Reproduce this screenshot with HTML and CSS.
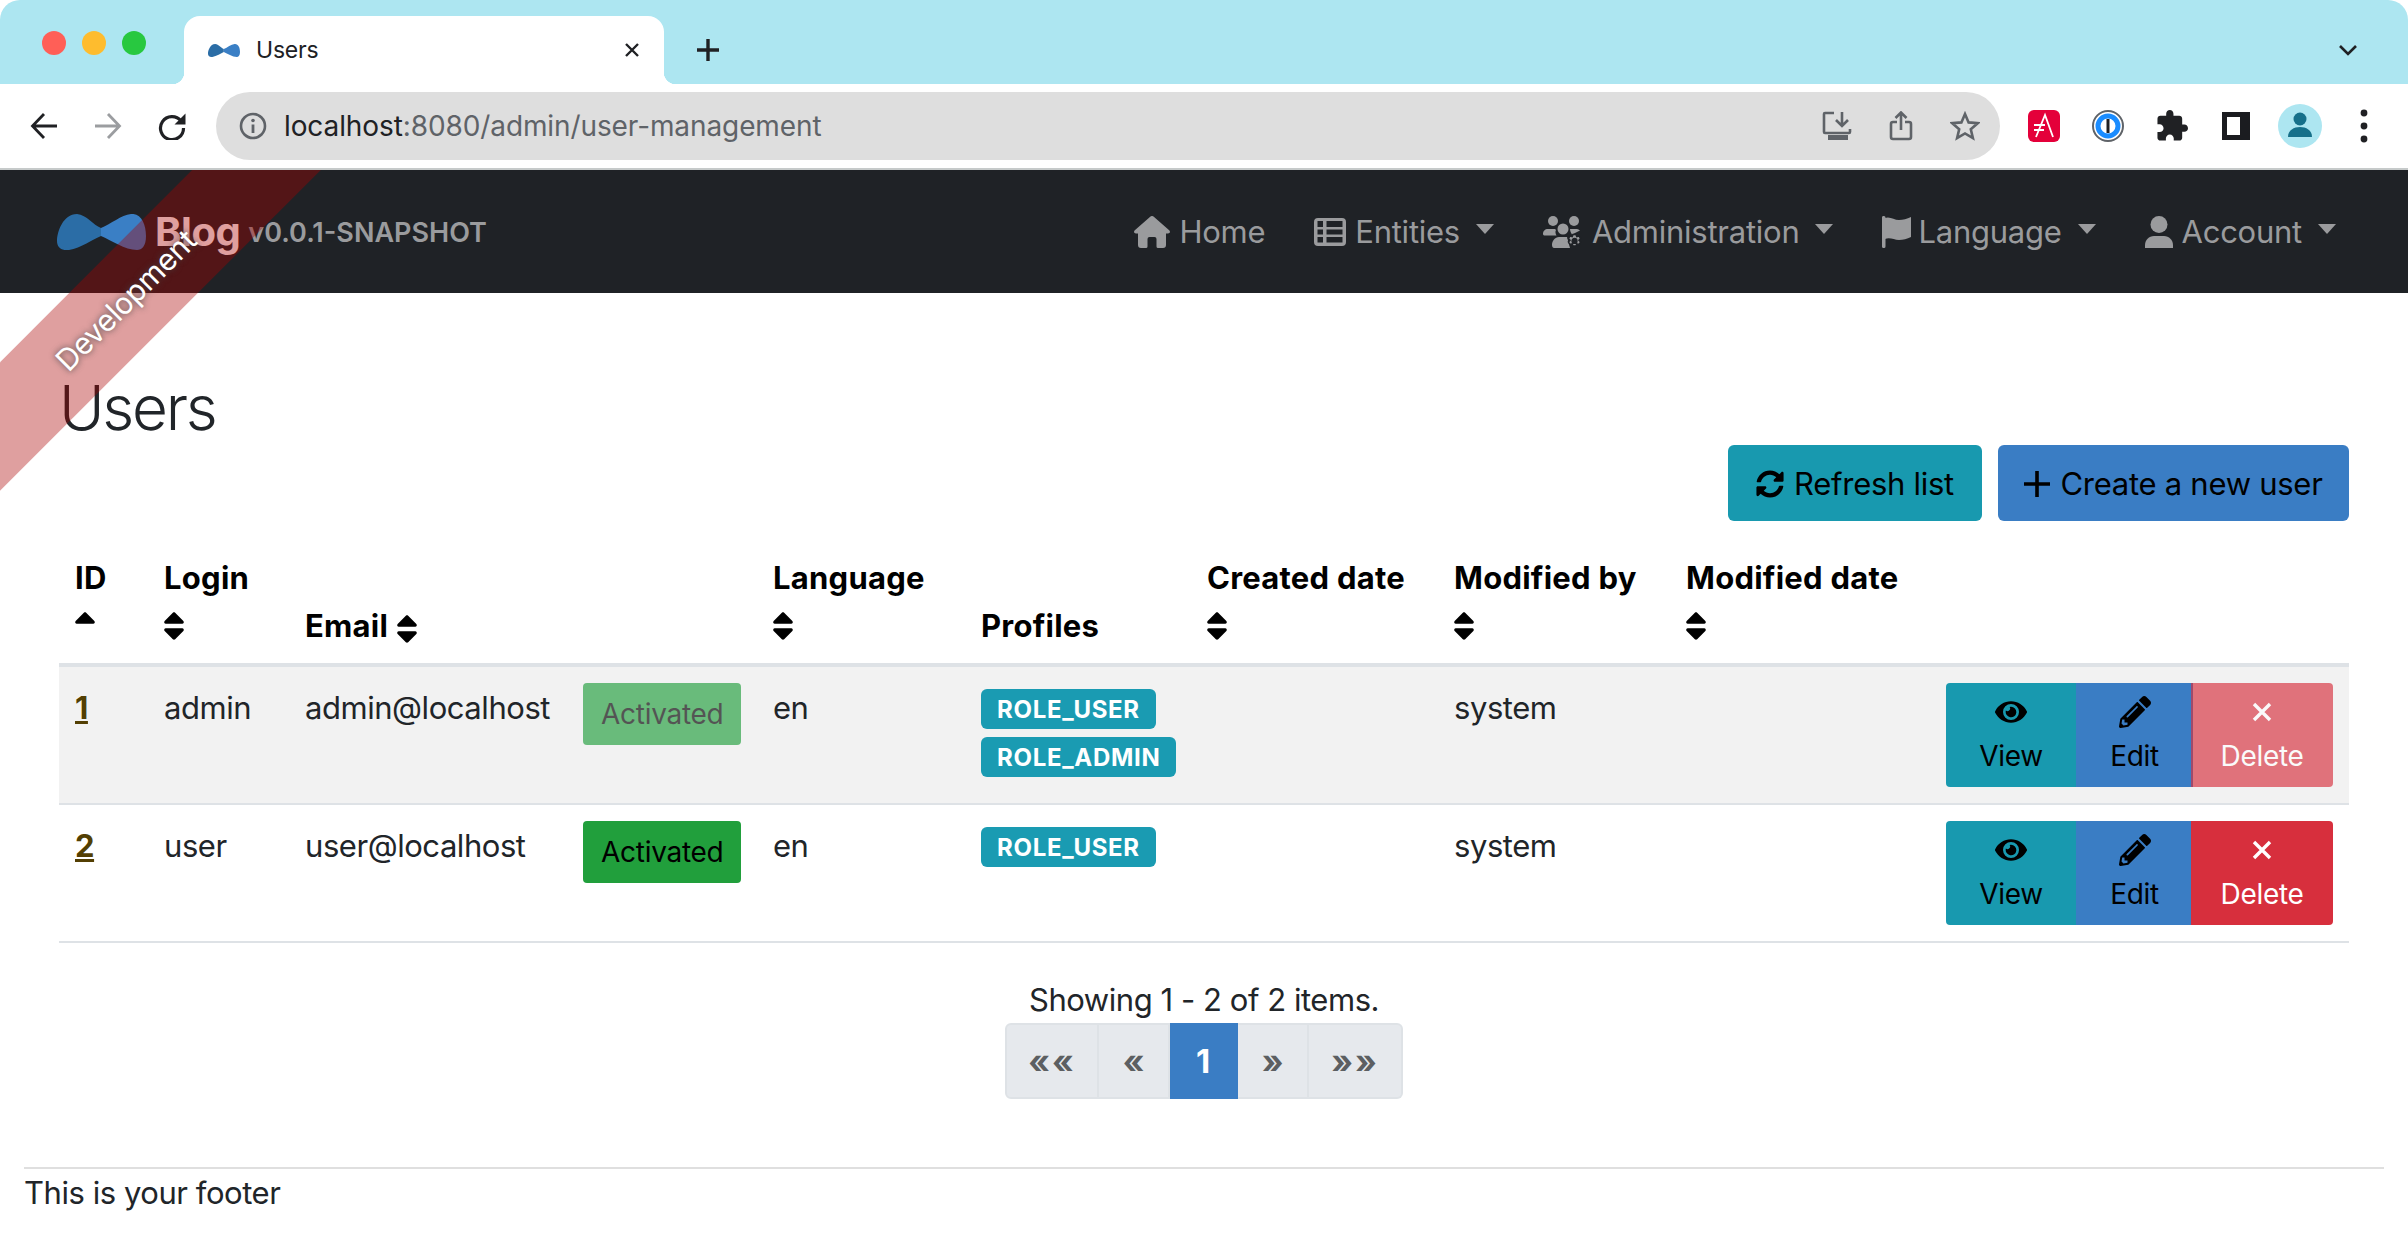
FILE: index.html
```html
<!DOCTYPE html>
<html lang="en">
<head>
    <meta charset="UTF-8">
    <title>Users</title>
    <link rel="stylesheet" href="styles.css">
</head>
<body>
    <!-- icon sprite -->
    <svg class="sprite" xmlns="http://www.w3.org/2000/svg">
        <symbol id="i-bow" viewBox="0 0 89 36">
            <path fill="#2b6da6" d="M20 0C30 1 36 11 44 14V22C36 25 24 34 12 36 4 37 0 33 0 27 0 18 6 0 20 0z"/>
            <path fill="#3a7fc5" d="M74 0C84-1 89 10 89 22 89 32 85 36 80 36 68 36 54 26 44 22V14C54 10 64 1 74 0z"/>
        </symbol>
        <symbol id="i-sort" viewBox="0 0 320 512">
            <path d="M41 288h238c21.4 0 32.1 25.9 17 41L177 448c-9.4 9.4-24.6 9.4-33.9 0L24 329c-15.1-15.1-4.4-41 17-41zm255-105L177 64c-9.4-9.4-24.6-9.4-33.9 0L24 183c-15.1 15.1-4.4 41 17 41h238c21.4 0 32.1-25.9 17-41z"/>
        </symbol>
        <symbol id="i-sort-up" viewBox="0 0 320 512">
            <path d="M296 183L177 64c-9.4-9.4-24.6-9.4-33.9 0L24 183c-15.1 15.1-4.4 41 17 41h238c21.4 0 32.1-25.9 17-41z"/>
        </symbol>
        <symbol id="i-eye" viewBox="0 0 576 512">
            <path d="M572.52 241.4C518.29 135.59 410.93 64 288 64S57.68 135.64 3.48 241.41a32.35 32.35 0 0 0 0 29.19C57.71 376.41 165.07 448 288 448s230.32-71.64 284.52-177.41a32.35 32.35 0 0 0 0-29.19zM288 400a144 144 0 1 1 144-144 143.93 143.93 0 0 1-144 144zm0-240a95.31 95.31 0 0 0-25.31 3.79 47.85 47.85 0 0 1-66.9 66.9A95.78 95.78 0 1 0 288 160z"/>
        </symbol>
        <symbol id="i-pencil" viewBox="0 0 512 512">
            <path d="M497.9 142.1l-46.1 46.1c-4.7 4.7-12.3 4.7-17 0l-111-111c-4.7-4.7-4.7-12.3 0-17l46.1-46.1c18.7-18.7 49.1-18.7 67.9 0l60.1 60.1c18.8 18.7 18.8 49.1 0 67.9zM284.2 99.8L21.6 362.4.4 483.9c-2.9 16.4 11.4 30.6 27.8 27.8l121.5-21.3 262.6-262.6c4.7-4.7 4.7-12.3 0-17l-111-111c-4.8-4.7-12.4-4.7-17.1 0zM124.1 339.9c-5.5-5.5-5.5-14.3 0-19.8l154-154c5.5-5.5 14.3-5.5 19.8 0s5.5 14.3 0 19.8l-154 154c-5.5 5.5-14.3 5.5-19.8 0zM88 424h48v36.3l-64.5 11.3-31.1-31.1L51.7 376H88v48z"/>
        </symbol>
        <symbol id="i-times" viewBox="0 0 20 20">
            <path d="M2 2l16 16M18 2L2 18" fill="none" stroke="currentColor" stroke-width="3.4"/>
        </symbol>
    </svg>

    <!-- browser window -->
    <div class="tabstrip">
        <div class="lights">
            <span class="light light-red"></span>
            <span class="light light-yellow"></span>
            <span class="light light-green"></span>
        </div>
        <div class="tab">
            <svg class="tab-fav"><use href="#i-bow"/></svg>
            <span class="tab-title">Users</span>
            <svg class="tab-close" viewBox="0 0 16 16"><path d="M2 2l12 12M14 2L2 14" fill="none" stroke="#202124" stroke-width="2.4"/></svg>
        </div>
        <svg class="tab-new" viewBox="0 0 24 24"><path d="M12 1v22M1 12h22" fill="none" stroke="#202124" stroke-width="3.4"/></svg>
        <svg class="tab-more" viewBox="0 0 20 12"><path d="M2 2l8 8 8-8" fill="none" stroke="#202124" stroke-width="2.6"/></svg>
    </div>
    <div class="toolbar">
        <svg class="tool" viewBox="0 0 28 28"><path d="M27 14H3M14 2L2.5 14 14 26" fill="none" stroke="#202124" stroke-width="2.8"/></svg>
        <svg class="tool" viewBox="0 0 28 28"><path d="M1 14h24M14 2l11.5 12L14 26" fill="none" stroke="#9b9da0" stroke-width="2.8"/></svg>
        <svg class="tool" viewBox="0 0 28 28"><path d="M23 9A11.500 11.500 0 1 0 25.500 16" fill="none" stroke="#202124" stroke-width="3.200"/><path d="M27.500 1.500v11h-11z" fill="#202124"/></svg>
        <div class="omnibox">
            <svg class="omni-info" viewBox="0 0 28 28"><circle cx="14" cy="14" r="12" fill="none" stroke="#5f6368" stroke-width="2.6"/><path d="M14 12.5V21" stroke="#5f6368" stroke-width="2.8"/><circle cx="14" cy="8.5" r="1.8" fill="#5f6368"/></svg>
            <span class="omni-url"><span class="omni-host">localhost</span>:8080/admin/user-management</span>
            <svg class="omni-icon" viewBox="0 0 30 30"><path d="M12 2H3a1 1 0 0 0-1 1v18a1 1 0 0 0 1 1h24a1 1 0 0 0 1-1v-3M20 1v13M14 9l6 6 6-6" fill="none" stroke="#5f6368" stroke-width="2.6"/><path d="M6 24h20v5H6z" fill="#5f6368"/></svg>
            <svg class="omni-icon" viewBox="0 0 30 30"><path d="M11 11H7a2 2 0 0 0-2 2v13a2 2 0 0 0 2 2h16a2 2 0 0 0 2-2V13a2 2 0 0 0-2-2h-4M15 19V2M9.5 7L15 1.500 20.500 7" fill="none" stroke="#5f6368" stroke-width="2.6"/></svg>
            <svg class="omni-icon" viewBox="0 0 30 30"><path d="M15 3l3.6 8.4 9.1.8-6.9 6 2.1 8.900L15 22.400l-7.900 4.700 2.100-8.900-6.900-6 9.100-.8z" fill="none" stroke="#5f6368" stroke-width="2.6"/></svg>
        </div>
        <div class="exts">
            <svg class="ext" viewBox="0 0 32 32"><rect width="32" height="32" rx="6" fill="#e4003a"/><path d="M8 27L17 5l8 22M6 15h11M6 20h10" fill="none" stroke="#fff" stroke-width="1.8"/></svg>
            <svg class="ext" viewBox="0 0 32 32"><circle cx="16" cy="16" r="15" fill="#fff" stroke="#5f6368" stroke-width="2"/><circle cx="16" cy="16" r="10" fill="none" stroke="#1a8cff" stroke-width="5"/><path d="M14.5 9h3v14h-3z" fill="#202124"/></svg>
            <svg class="ext ext-puzzle" viewBox="1 1 22 22"><path fill="#202124" d="M20.5 11H19V7c0-1.100-.9-2-2-2h-4V3.500C13 2.120 11.880 1 10.500 1S8 2.120 8 3.500V5H4c-1.100 0-1.990.9-1.990 2v3.800H3.500c1.490 0 2.700 1.210 2.700 2.700s-1.210 2.700-2.700 2.700H2V20c0 1.100.9 2 2 2h3.800v-1.500c0-1.490 1.210-2.700 2.700-2.700 1.490 0 2.700 1.210 2.700 2.700V22H17c1.100 0 2-.9 2-2v-4h1.500c1.380 0 2.500-1.120 2.500-2.500S21.880 11 20.500 11z"/></svg>
            <span class="ext-panel"></span>
            <span class="avatar"><svg viewBox="0 0 44 44"><circle cx="22" cy="15" r="6.5" fill="#16708a"/><path d="M10 33c0-7 6-10 12-10s12 3 12 10z" fill="#16708a"/></svg></span>
            <svg class="dots" viewBox="0 0 8 36"><circle cx="4" cy="5" r="3.4"/><circle cx="4" cy="18" r="3.4"/><circle cx="4" cy="31" r="3.4"/></svg>
        </div>
    </div>

    <!-- app -->
    <div class="page">
        <div class="ribbon">Development</div>

        <nav class="navbar">
            <a class="brand" href="#">
                <svg class="brand-logo"><use href="#i-bow"/></svg>
                <span class="brand-title">Blog</span>
                <span class="brand-version">v0.0.1-SNAPSHOT</span>
            </a>
            <ul class="nav-list">
                <li class="nav-item">
                    <svg class="nav-icon icon-home" viewBox="0 0 36 32"><path d="M16.500.6a2.300 2.300 0 0 1 3 0l15.700 13.600c1.500 1.400.6 3.300-1.200 3.300H32v11.500a3 3 0 0 1-3 3h-5a1.500 1.500 0 0 1-1.500-1.500v-7.500a2 2 0 0 0-2-2h-5a2 2 0 0 0-2 2v7.500A1.500 1.500 0 0 1 12 32H7a3 3 0 0 1-3-3V17.500H2c-1.800 0-2.700-1.900-1.200-3.300z"/></svg>
                    Home
                </li>
                <li class="nav-item has-caret">
                    <svg class="nav-icon icon-table" viewBox="0 0 32 28"><path fill-rule="evenodd" d="M4 0h24a4 4 0 0 1 4 4v20a4 4 0 0 1-4 4H4a4 4 0 0 1-4-4V4a4 4 0 0 1 4-4zM3.500 3v6h5.500V3zm9 0v6h16V3zM3.500 11.500v5h5.500v-5zm9 0v5h16v-5zM3.500 19v5.500h5.500V19zm9 0v5.500h16V19z"/></svg>
                    Entities
                </li>
                <li class="nav-item has-caret">
                    <svg class="nav-icon icon-admin" viewBox="0 0 40 32"><circle cx="10" cy="5" r="5"/><circle cx="31" cy="5" r="5"/><circle cx="20" cy="13" r="5.500"/><path d="M0 18c0-3 2-5 5-5h6c1 0 1.500.3 2 1-1 1.500-.5 4 .5 5.500H2c-1 0-2-.5-2-1.500zM27 13h7c1 0 2 .5 3 1.500l-8 4c-1-1.500-2-3.500-2-5.500zM9 29c0-4 3-8 7-8h8l3 11H11c-1 0-2-1-2-3z"/><path stroke="#1f2226" stroke-width="1.500" fill-rule="evenodd" d="M33 18.500l.8 2.100 2.300-.6 1.500 2.500-1.600 1.700 1.600 1.700-1.500 2.500-2.300-.6-.8 2.200h-3l-.8-2.200-2.300.6-1.500-2.500 1.600-1.700-1.600-1.700 1.500-2.500 2.300.6.800-2.100zM31.500 22.500a2.400 2.400 0 1 0 0 4.800 2.400 2.400 0 0 0 0-4.800z"/></svg>
                    Administration
                </li>
                <li class="nav-item has-caret">
                    <svg class="nav-icon icon-flag" viewBox="0 0 29 32"><path d="M1 0h1a1.500 1.500 0 0 1 1.500 1.500v29A1.500 1.500 0 0 1 2 32H1a1.500 1.500 0 0 1-1-1.500v-29A1.500 1.500 0 0 1 1 0z"/><path d="M3 2c5-2 9 2 14 2 4 0 8-1 12-3v20c-4 2-8 3-12 3-5 0-9-3-14-1z"/></svg>
                    Language
                </li>
                <li class="nav-item has-caret">
                    <svg class="nav-icon icon-user" viewBox="0 0 28 32"><circle cx="14" cy="8.500" r="8.500"/><path d="M9 20h10c5 0 9 4 9 9v3H0v-3c0-5 4-9 9-9z"/></svg>
                    Account
                </li>
            </ul>
        </nav>

        <main class="content">
            <div class="page-head">
                <h2 class="page-title">Users</h2>
                <div class="head-actions">
                    <button class="btn btn-info btn-refresh">
                        <svg class="btn-icon" viewBox="0 0 512 512"><path d="M370.72 133.28C339.458 104.008 298.888 87.962 255.848 88c-77.458.068-144.328 53.178-162.791 126.85-1.344 5.363-6.122 9.15-11.651 9.15H24.103c-7.498 0-13.194-6.807-11.807-14.176C33.933 94.924 134.813 8 256 8c66.448 0 126.791 26.136 171.315 68.685L463.03 40.97C478.149 25.851 504 36.559 504 57.941V192c0 13.255-10.745 24-24 24H345.941c-21.382 0-32.09-25.851-16.971-40.971l41.75-41.749zM32 296h134.059c21.382 0 32.09 25.851 16.971 40.971l-41.75 41.75c31.262 29.273 71.835 45.319 114.876 45.28 77.418-.07 144.315-53.144 162.787-126.849 1.344-5.363 6.122-9.15 11.651-9.15h57.304c7.498 0 13.194 6.807 11.807 14.176C478.067 417.076 377.187 504 256 504c-66.448 0-126.791-26.136-171.315-68.685L48.97 471.03C33.851 486.149 8 475.441 8 454.059V320c0-13.255 10.745-24 24-24z"/></svg>
                        Refresh list
                    </button>
                    <button class="btn btn-primary btn-create">
                        <svg class="btn-icon" viewBox="0 0 26 26"><path d="M13 0v26M0 13h26" fill="none" stroke="currentColor" stroke-width="3.6"/></svg>
                        Create a new user
                    </button>
                </div>
            </div>

            <table class="users">
                <colgroup>
                    <col class="col-id"><col class="col-login"><col class="col-email"><col class="col-status">
                    <col class="col-lang"><col class="col-profiles"><col class="col-created"><col class="col-modby">
                    <col class="col-moddate"><col>
                </colgroup>
                <thead>
                    <tr>
                        <th>ID <svg class="sort sort-block"><use href="#i-sort-up"/></svg></th>
                        <th>Login <svg class="sort sort-block"><use href="#i-sort"/></svg></th>
                        <th>Email <svg class="sort"><use href="#i-sort"/></svg></th>
                        <th></th>
                        <th>Language <svg class="sort sort-block"><use href="#i-sort"/></svg></th>
                        <th>Profiles</th>
                        <th>Created date <svg class="sort sort-block"><use href="#i-sort"/></svg></th>
                        <th>Modified by <svg class="sort sort-block"><use href="#i-sort"/></svg></th>
                        <th>Modified date <svg class="sort sort-block"><use href="#i-sort"/></svg></th>
                        <th></th>
                    </tr>
                </thead>
                <tbody>
                    <tr class="row-striped">
                        <td><a class="id-link" href="#">1</a></td>
                        <td>admin</td>
                        <td>admin@localhost</td>
                        <td><button class="btn-sm btn-success is-disabled">Activated</button></td>
                        <td>en</td>
                        <td>
                            <div class="roles">
                                <span class="role">ROLE_USER</span>
                                <span class="role">ROLE_ADMIN</span>
                            </div>
                        </td>
                        <td></td>
                        <td>system</td>
                        <td></td>
                        <td class="cell-actions">
                            <div class="btn-group">
                                <button class="btn-sm act act-view btn-info"><svg class="act-icon"><use href="#i-eye"/></svg><span>View</span></button>
                                <button class="btn-sm act act-edit btn-primary"><svg class="act-icon"><use href="#i-pencil"/></svg><span>Edit</span></button>
                                <button class="btn-sm act act-delete btn-danger is-disabled"><svg class="act-icon"><use href="#i-times"/></svg><span>Delete</span></button>
                            </div>
                        </td>
                    </tr>
                    <tr>
                        <td><a class="id-link" href="#">2</a></td>
                        <td>user</td>
                        <td>user@localhost</td>
                        <td><button class="btn-sm btn-success">Activated</button></td>
                        <td>en</td>
                        <td>
                            <div class="roles">
                                <span class="role">ROLE_USER</span>
                            </div>
                        </td>
                        <td></td>
                        <td>system</td>
                        <td></td>
                        <td class="cell-actions">
                            <div class="btn-group">
                                <button class="btn-sm act act-view btn-info"><svg class="act-icon"><use href="#i-eye"/></svg><span>View</span></button>
                                <button class="btn-sm act act-edit btn-primary"><svg class="act-icon"><use href="#i-pencil"/></svg><span>Edit</span></button>
                                <button class="btn-sm act act-delete btn-danger"><svg class="act-icon"><use href="#i-times"/></svg><span>Delete</span></button>
                            </div>
                        </td>
                    </tr>
                </tbody>
            </table>

            <div class="paging">
                <div class="paging-info">Showing 1 - 2 of 2 items.</div>
                <ul class="pagination">
                    <li class="page-link page-outer">««</li>
                    <li class="page-link">«</li>
                    <li class="page-link page-active">1</li>
                    <li class="page-link">»</li>
                    <li class="page-link page-outer">»»</li>
                </ul>
            </div>
        </main>

        <footer class="footer">
            <p>This is your footer</p>
        </footer>
    </div>
</body>
</html>
```

FILE: styles.css
```css
html, body {
    margin: 0;
    padding: 0;
    background: #fff;
}
body {
    width: 2408px;
    height: 1256px;
    overflow: hidden;
    font-family: Inter, "Noto Sans", sans-serif;
    font-size: 31px;
    line-height: 48px;
    letter-spacing: -0.45px;
    color: #212529;
}
.sprite {
    display: none;
}
ul {
    list-style: none;
    margin: 0;
    padding: 0;
}
button {
    font: inherit;
    letter-spacing: inherit;
    cursor: pointer;
}
a {
    text-decoration: none;
}

/* browser tabs */
.tabstrip {
    height: 84px;
    background: #ade6f1;
    border-radius: 20px 20px 0 0;
    display: flex;
    align-items: flex-end;
    position: relative;
}
.lights {
    display: flex;
    gap: 16px;
    padding: 0 38px 0 42px;
    align-self: flex-start;
    margin-top: 31px;
}
.light {
    width: 24px;
    height: 24px;
    border-radius: 50%;
}
.light-red { background: #ff5f57; }
.light-yellow { background: #febc2e; }
.light-green { background: #28c840; }
.tab {
    width: 480px;
    height: 68px;
    box-sizing: border-box;
    background: #fff;
    border-radius: 16px 16px 0 0;
    display: flex;
    align-items: center;
    padding: 0 24px;
    position: relative;
    font-size: 23px;
    letter-spacing: -0.01em;
    color: #202124;
}
.tab::before, .tab::after {
    content: "";
    position: absolute;
    bottom: 0;
    width: 12px;
    height: 12px;
    background: radial-gradient(circle at 0 0, #ade6f1 12px, #fff 12.5px);
}
.tab::before {
    left: -12px;
}
.tab::after {
    right: -12px;
    transform: scaleX(-1);
}
.tab-fav {
    width: 32px;
    height: 15px;
    margin-right: 16px;
}
.tab-title {
    flex: 1;
}
.tab-close {
    width: 16px;
    height: 16px;
}
.tab-new {
    width: 24px;
    height: 24px;
    margin: 0 0 22px 32px;
}
.tab-more {
    width: 20px;
    height: 12px;
    margin: 0 50px 28px auto;
}

/* browser toolbar */
.toolbar {
    height: 86px;
    box-sizing: border-box;
    border-bottom: 2px solid #c6caca;
    display: flex;
    align-items: center;
    padding: 0 0 0 30px;
}
.tool {
    width: 28px;
    height: 28px;
    margin-right: 36px;
}
.tool:nth-child(3) {
    margin-right: 30px;
}
.omnibox {
    width: 1784px;
    height: 68px;
    box-sizing: border-box;
    background: #dedede;
    border-radius: 34px;
    display: flex;
    align-items: center;
    padding: 0 20px 0 23px;
}
.omni-info {
    width: 28px;
    height: 28px;
    margin-right: 17px;
}
.omni-url {
    flex: 1;
    font-size: 28px;
    letter-spacing: -0.1px;
    color: #5f6368;
}
.omni-host {
    color: #202124;
}
.omni-icon {
    width: 30px;
    height: 30px;
    margin-left: 34px;
}
.exts {
    display: flex;
    align-items: center;
    margin-left: 28px;
}
.ext {
    width: 32px;
    height: 32px;
    margin-right: 32px;
}
.ext-puzzle {
    margin-right: 34px;
}
.ext-panel {
    width: 28px;
    height: 28px;
    box-sizing: border-box;
    border: 5px solid #1b1c20;
    border-right-width: 10px;
    margin-right: 28px;
}
.avatar {
    width: 44px;
    height: 44px;
    border-radius: 50%;
    background: #ade6f1;
    margin-right: 38px;
}
.avatar svg {
    display: block;
}
.dots {
    width: 8px;
    height: 36px;
    fill: #202124;
}

/* page */
.page {
    position: relative;
    overflow: hidden;
    height: 1086px;
}
.ribbon {
    position: absolute;
    left: -174px;
    top: 85px;
    width: 600px;
    height: 91px;
    line-height: 91px;
    background: rgba(170, 0, 0, 0.375);
    transform: rotate(-45deg);
    color: #fff;
    text-align: center;
    text-shadow: 0 0 6px #444;
    font-size: 30px;
    letter-spacing: -0.01em;
    z-index: 10;
    pointer-events: none;
}

/* navbar */
.navbar {
    height: 123px;
    background: #1f2226;
    display: flex;
    align-items: center;
    justify-content: space-between;
    padding: 0 56px 0 57px;
    box-sizing: border-box;
}
.brand {
    display: flex;
    align-items: center;
    color: #fff;
}
.brand-logo {
    width: 89px;
    height: 36px;
    margin-right: 9px;
}
.brand-title {
    font-size: 40px;
    font-weight: 700;
    margin-right: 8px;
}
.brand-version {
    font-size: 27px;
    font-weight: 600;
    letter-spacing: 0;
    color: #9a9b9d;
    margin-top: 2px;
}
.nav-list {
    display: flex;
    gap: 17px;
}
.nav-item {
    display: flex;
    align-items: center;
    padding: 0 16px;
    color: #9a9b9d;
    letter-spacing: -0.25px;
}
.nav-icon {
    fill: #9a9b9d;
    height: 32px;
    margin-right: 9px;
}
.icon-home { width: 36px; }
.icon-table { width: 32px; height: 28px; }
.icon-admin { width: 40px; }
.icon-flag { width: 29px; margin-right: 7px; }
.icon-user { width: 28px; }
.has-caret::after {
    content: "";
    margin-left: 16px;
    border-top: 10px solid #9a9b9d;
    border-left: 9px solid transparent;
    border-right: 9px solid transparent;
    margin-bottom: 6px;
}

/* content */
.content {
    padding: 0 59px;
}
.page-head {
    display: flex;
    justify-content: space-between;
    align-items: flex-start;
    padding-top: 76px;
    margin-bottom: 15px;
}
.page-title {
    margin: 0;
    font-size: 62px;
    font-weight: 300;
    line-height: 77px;
    letter-spacing: -2.3px;
}
.head-actions {
    display: flex;
    gap: 16px;
    margin-top: 76px;
}
.btn {
    height: 76px;
    border: 0;
    border-radius: 6px;
    padding: 2px 0 0;
    display: flex;
    align-items: center;
    justify-content: center;
    color: #000;
    letter-spacing: -0.27px;
}
.btn-refresh { width: 254px; }
.btn-create { width: 351px; }
.btn-icon {
    width: 28px;
    height: 28px;
    margin-right: 10px;
    fill: currentColor;
}
.btn-create .btn-icon {
    width: 26px;
    height: 26px;
}
.btn-sm {
    height: 62px;
    padding: 0 18px;
    border: 0;
    border-radius: 4px;
    font-size: 28px;
    line-height: 42px;
    letter-spacing: -0.01em;
    color: #000;
    display: block;
}
.btn-info { background: #1899af; }
.btn-primary { background: #3a7dc4; }
.btn-success { background: #219f3c; }
.btn-danger { background: #d72f3d; color: #fff; }
.is-disabled { opacity: 0.65; }

/* table */
.users {
    width: 2290px;
    table-layout: fixed;
    border-collapse: collapse;
}
.col-id { width: 89px; }
.col-login { width: 141px; }
.col-email { width: 278px; }
.col-status { width: 190px; }
.col-lang { width: 208px; }
.col-profiles { width: 226px; }
.col-created { width: 247px; }
.col-modby { width: 232px; }
.col-moddate { width: 260px; }
.users th {
    padding: 18px 16px 13px;
    text-align: left;
    vertical-align: bottom;
    font-weight: 700;
    letter-spacing: 0.25px;
    color: #000;
    border-bottom: 4px solid #dee2e6;
    white-space: nowrap;
}
.users td {
    padding: 16px;
    vertical-align: top;
    line-height: 50px;
    border-bottom: 2px solid #dee2e6;
}
.row-striped {
    background: #f2f2f2;
}
.sort {
    width: 22px;
    height: 36px;
    vertical-align: middle;
}
.sort-block {
    display: block;
    margin: 6px 0 6px -1px;
}
.id-link {
    color: #533f03;
    font-weight: 700;
    text-decoration: underline;
}
.roles {
    display: flex;
    flex-direction: column;
    align-items: flex-start;
    gap: 8px;
    padding-top: 6px;
}
.role {
    height: 40px;
    line-height: 42px;
    padding: 0 16px;
    border-radius: 6px;
    background: #1a9bb2;
    color: #fff;
    font-size: 24px;
    font-weight: 700;
    letter-spacing: 0.7px;
}
.cell-actions {
    text-align: right;
}
.btn-group {
    display: flex;
    justify-content: flex-end;
}
.act {
    height: 104px;
    padding: 0;
    border-radius: 0;
}
.act span {
    display: block;
}
.act-icon {
    display: block;
    width: 32px;
    height: 32px;
    margin: 3px auto 7px;
    fill: currentColor;
    color: inherit;
}
.act-view {
    width: 131px;
    border-radius: 4px 0 0 4px;
}
.act-edit {
    width: 118px;
}
.act-delete {
    width: 143px;
    margin-left: -2px;
    border-radius: 0 4px 4px 0;
}
.act-delete .act-icon {
    width: 20px;
    height: 20px;
    margin: 9px auto 13px;
}

/* pagination */
.paging {
    text-align: center;
    margin-top: 32px;
}
.paging-info {
    padding-top: 1px;
    margin-bottom: -1px;
}
.pagination {
    display: flex;
    justify-content: center;
}
.page-link {
    height: 76px;
    box-sizing: border-box;
    border: 2px solid #dee2e6;
    border-left-width: 0;
    background: #e6e9ed;
    color: #5c5f62;
    font-size: 33px;
    font-weight: 700;
    line-height: 72px;
    width: 71px;
}
.page-outer {
    width: 94px;
    letter-spacing: 2px;
}
.page-link:first-child {
    border-left-width: 2px;
    border-radius: 6px 0 0 6px;
}
.page-link:last-child {
    border-radius: 0 6px 6px 0;
}
.page-active {
    width: 68px;
    background: #3a7dc4;
    border-color: #3a7dc4;
    color: #fff;
}

/* footer */
.footer {
    margin: 68px 24px 0;
    border-top: 2px solid #dfdfdf;
}
.footer p {
    margin: 0;
}
```
